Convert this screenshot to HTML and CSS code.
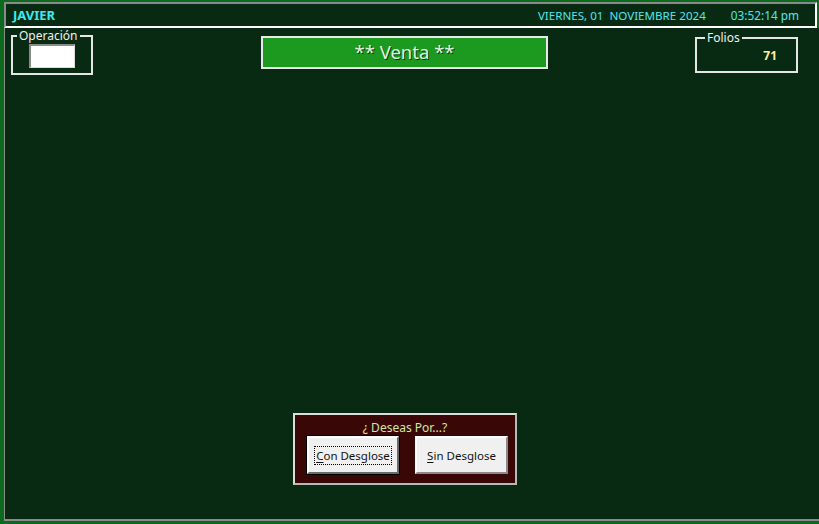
FILE: index.html
```html
<!DOCTYPE html>
<html lang="es">
<head>
<meta charset="utf-8">
<title>Venta</title>
<link rel="stylesheet" href="styles.css">
</head>
<body>
<div class="screen">
  <header class="titlebar">
    <span class="user">JAVIER</span>
    <span class="date">VIERNES, 01&nbsp; NOVIEMBRE 2024</span>
    <span class="time">03:52:14 pm</span>
  </header>
  <main class="panel">
    <div class="toprow">
      <fieldset class="group op">
        <legend>Operación</legend>
        <div class="opinput"></div>
      </fieldset>
      <div class="venta">** Venta **</div>
      <fieldset class="group folios">
        <legend>Folios</legend>
        <div class="folnum">71</div>
      </fieldset>
    </div>
    <div class="dialog">
      <div class="question">¿ Deseas Por...?</div>
      <div class="buttons">
        <button class="btn default"><span class="focus"><u>C</u>on Desglose</span></button>
        <button class="btn"><u>S</u>in Desglose</button>
      </div>
    </div>
  </main>
</div>
</body>
</html>
```
FILE: styles.css
```css
html, body {
  margin: 0;
  padding: 0;
  width: 819px;
  height: 524px;
  overflow: hidden;
  background: #0b6a1c;
  font-family: "Noto Sans", "Open Sans", sans-serif;
}
.screen {
  padding: 2px 0 0 4px;
  width: 815px;
  height: 522px;
  display: flex;
  flex-direction: column;
}
.titlebar {
  box-sizing: border-box;
  width: 813px;
  height: 26px;
  flex: none;
  background: #082a13;
  border-top: 2px solid #8a8a8a;
  border-left: 2px solid #8a8a8a;
  border-right: 2px solid #ffffff;
  border-bottom: 2px solid #ffffff;
  display: flex;
  align-items: center;
  color: #4ee6ee;
  font-size: 11.6px;
}
.user {
  font-weight: bold;
  font-size: 13px;
  margin-left: 7px;
  color: #3fe8f0;
}
.date {
  margin-left: auto;
  margin-right: 25px;
}
.time {
  margin-right: 16px;
  font-size: 11.8px;
}
.panel {
  box-sizing: border-box;
  width: 830px;
  height: 493px;
  flex: none;
  background: #082a13;
  border-left: 1px solid #8a8a8a;
  border-bottom: 2px solid #8a8a8a;
  display: flex;
  flex-direction: column;
}
.toprow {
  display: flex;
  align-items: flex-start;
  padding-top: 2px;
}
.group {
  box-sizing: border-box;
  margin: 0;
  padding: 0;
  border: 2px solid #e6e6e6;
  color: #f0f0f0;
  font-size: 12px;
}
.group legend {
  padding: 0 2px;
  margin-left: 4px;
  line-height: 11px;
}
.op {
  margin-left: 6px;
  width: 82px;
  height: 45px;
  display: flex;
  justify-content: center;
}
.opinput {
  box-sizing: border-box;
  width: 46px;
  height: 24px;
  margin-top: 3px;
  background: #ffffff;
  border-top: 2px solid #8a8a8a;
  border-left: 2px solid #8a8a8a;
  border-right: 1px solid #dcdcdc;
  border-bottom: 1px solid #dcdcdc;
}
.venta {
  box-sizing: border-box;
  margin-left: 168px;
  margin-top: 6px;
  width: 287px;
  height: 33px;
  background: #1c9a20;
  border: 2px solid #e8e8e8;
  color: #dcf8dc;
  font-size: 18.5px;
  text-align: center;
  line-height: 28px;
  text-shadow: 1px 1px 0 #0c3a0e;
}
.folios {
  margin-left: 147px;
  margin-top: 2px;
  width: 103px;
  height: 41px;
}
.folios legend {
  margin-left: 8px;
}
.folnum {
  text-align: right;
  padding-right: 19px;
  margin-top: 4px;
  font-weight: bold;
  font-size: 12px;
  color: #fbf0a8;
}
.dialog {
  box-sizing: border-box;
  margin-top: auto;
  margin-bottom: 34px;
  margin-left: 288px;
  width: 224px;
  height: 72px;
  background: #3a0707;
  border: 2px solid #dcdcdc;
  border-right-color: #b8b8b8;
  border-bottom-color: #b8b8b8;
  display: flex;
  flex-direction: column;
  align-items: center;
}
.question {
  margin-top: 5px;
  color: #cfe8a8;
  font-size: 12px;
  line-height: 15px;
}
.buttons {
  display: flex;
  gap: 16px;
  margin-top: 1px;
  margin-left: 5px;
}
.btn {
  box-sizing: border-box;
  width: 93px;
  height: 38px;
  padding: 0;
  background: #f0f0f0;
  border: 2px solid;
  border-color: #ffffff #8a8a8a #8a8a8a #ffffff;
  font-family: "Noto Sans", "Open Sans", sans-serif;
  font-size: 11.5px;
  color: #111;
  display: flex;
  align-items: center;
  justify-content: center;
}
.btn.default {
  width: 92px;
  outline: 1px solid #000;
  outline-offset: 0;
  border-color: #ffffff #6a6a6a #6a6a6a #ffffff;
}
.focus {
  border: 1px dotted #000;
  padding: 1px 1px;
}
.btn u {
  text-decoration-thickness: 1px;
  text-underline-offset: 2px;
}
```
